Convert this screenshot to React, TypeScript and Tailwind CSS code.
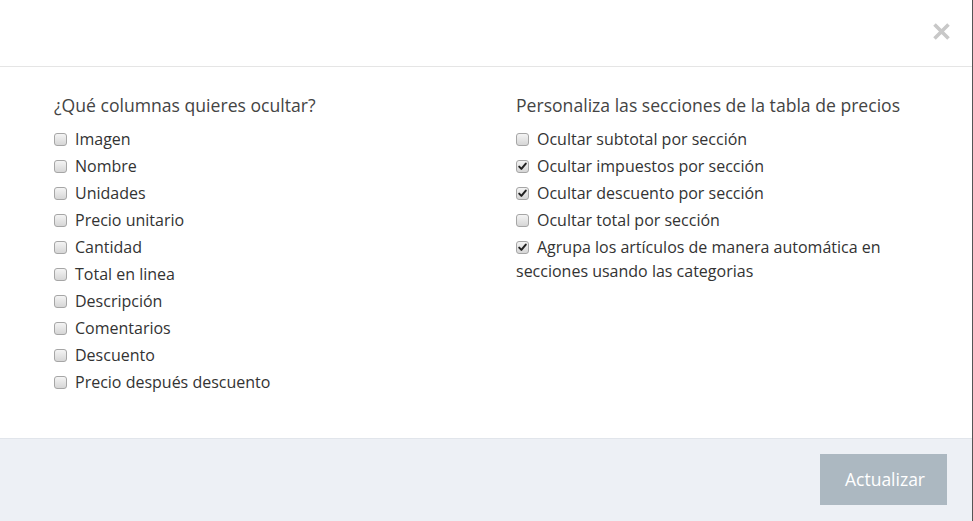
import React, { useState } from 'react';

const leftItems = [
  { label: 'Imagen', checked: false },
  { label: 'Nombre', checked: false },
  { label: 'Unidades', checked: false },
  { label: 'Precio unitario', checked: false },
  { label: 'Cantidad', checked: false },
  { label: 'Total en linea', checked: false },
  { label: 'Descripción', checked: false },
  { label: 'Comentarios', checked: false },
  { label: 'Descuento', checked: false },
  { label: 'Precio después descuento', checked: false },
];

const rightItems = [
  { label: 'Ocultar subtotal por sección', checked: false },
  { label: 'Ocultar impuestos por sección', checked: true },
  { label: 'Ocultar descuento por sección', checked: true },
  { label: 'Ocultar total por sección', checked: false },
  { label: 'Agrupa los artículos de manera automática en secciones usando las categorias', checked: true },
];

const Box: React.FC<{ checked: boolean }> = ({ checked }) => (
  <span className="relative mr-2 inline-block h-[13px] w-[13px] rounded-[3px] border border-[#a6a6a6] bg-gradient-to-b from-[#f4f4f4] to-[#d6d6d6] align-[-1px]">
    {checked && (
      <svg viewBox="0 0 13 13" className="absolute left-[-1px] top-[-1px] h-[13px] w-[13px]">
        <path d="M3.2 6.6 L5.4 8.9 L9.8 3.6" fill="none" stroke="#222" strokeWidth="2" strokeLinecap="round" strokeLinejoin="round" />
      </svg>
    )}
  </span>
);

const Item: React.FC<{ label: string; checked: boolean }> = ({ label, checked: init }) => {
  const [checked, setChecked] = useState(init);
  return (
    <div className="mb-[3px] cursor-pointer text-[16px] leading-6 text-[#333]" onClick={() => setChecked(!checked)}>
      <Box checked={checked} />
      {label}
    </div>
  );
};

export default function App() {
  return (
    <div className="h-[521px] w-[973px] overflow-hidden border-r border-[#555] bg-white font-['Open_Sans',sans-serif]">
      <div className="flex h-[67px] items-start justify-end border-b border-[#e5e5e5] pr-[21px] pt-[22px]">
        <button aria-label="Cerrar" className="h-[19px] w-[19px]">
          <svg viewBox="0 0 19 19" className="h-[19px] w-[19px]">
            <path d="M2.5 2.5 L16.5 16.5 M16.5 2.5 L2.5 16.5" stroke="#c8c8c8" strokeWidth="3.6" strokeLinecap="butt" />
          </svg>
        </button>
      </div>
      <div className="grid h-[371px] grid-cols-[462px_462px] px-[39px] pt-[26px]">
        <div className="px-[15px]">
          <h4 className="mb-[10px] text-[17.6px] leading-6 text-[#444]">¿Qué columnas quieres ocultar?</h4>
          {leftItems.map((it) => (
            <Item key={it.label} {...it} />
          ))}
        </div>
        <div className="px-[15px]">
          <h4 className="mb-[10px] text-[17.6px] leading-6 text-[#444]">Personaliza las secciones de la tabla de precios</h4>
          {rightItems.map((it) => (
            <Item key={it.label} {...it} />
          ))}
        </div>
      </div>
      <div className="flex h-[83px] items-start justify-end border-t border-[#e1e5eb] bg-[#edf0f5] pr-[25px] pt-[15px]">
        <button className="h-[51px] w-[127px] bg-[#acb8c1] pl-[3px] text-[17.5px] text-white">Actualizar</button>
      </div>
    </div>
  );
}
